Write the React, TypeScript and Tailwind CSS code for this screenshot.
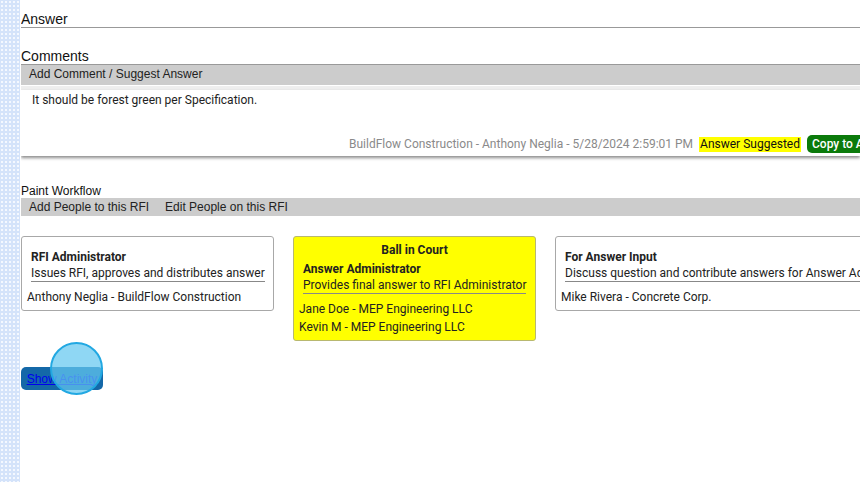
import React from "react";

const arial = { fontFamily: '"Liberation Sans", Arial, sans-serif' };
const roboto = { fontFamily: 'Roboto, "Liberation Sans", Arial, sans-serif' };

function Card({
  yellow,
  top,
  title,
  desc,
  people,
  width,
}: {
  yellow?: boolean;
  top?: string;
  title: string;
  desc: string;
  people: string[];
  width: string;
}) {
  return (
    <div
      className={
        "shrink-0 rounded-[3px] border " +
        (yellow ? "bg-[#ffff00] border-[#b8b870] " : "bg-white border-[#a8a8a8] ") +
        width
      }
      style={roboto}
    >
      <div className="px-[5px] pt-[6px] pb-[4px] text-[12px] leading-[18px] text-[#222] whitespace-nowrap">
        {top && <div className="text-center font-bold leading-[14px] mb-[5px]">{top}</div>}
        <div className={"px-[4px] " + (top ? "" : "pt-[7px]")}>
          <div className="font-bold leading-[14px]">{title}</div>
          <div className="border-b border-[#888] leading-[15px] inline-block">{desc}</div>
        </div>
        <div className="mt-[6px]">
          {people.map((p) => (
            <div key={p}>{p}</div>
          ))}
        </div>
      </div>
    </div>
  );
}

export default function App() {
  return (
    <div className="w-[860px] h-[482px] flex overflow-hidden bg-white">
      <div className="w-[20px] h-full shrink-0 bg-[#d4e3fa] bg-[image:radial-gradient(circle,#f4f8ff_1px,transparent_1.2px)] bg-[length:4px_4px]" />
      <div className="ml-px flex-1 min-w-0 overflow-hidden relative">
        <div className="pt-[11px] text-[14px] leading-[16px] text-[#111] border-b border-[#999]" style={arial}>
          Answer
        </div>
        <div className="mt-[20px] text-[14px] leading-[16px] text-[#111]" style={arial}>
          Comments
        </div>
        <div className="h-[21px] bg-[#cccccc] border-t border-[#999] pl-[8px] text-[12px] leading-[19px] text-[#222]" style={arial}>
          Add Comment / Suggest Answer
        </div>
        <div className="mt-px h-[4px] bg-[#eeeeee]" />
        <div className="bg-white shadow-[0_2px_3px_rgba(0,0,0,0.45)] h-[66px] relative" style={roboto}>
          <div className="pl-[11px] pt-[3px] text-[12px] leading-[14px] text-[#222]">
            It should be forest green per Specification.
          </div>
          <div className="absolute left-[328px] top-[45px] flex items-center whitespace-nowrap text-[12px]">
            <span className="text-[#8a8a8a]">BuildFlow Construction - Anthony Neglia - 5/28/2024 2:59:01 PM</span>
            <span className="ml-[6px] bg-[#ffff00] text-[#111] px-px leading-[15px]">Answer Suggested</span>
            <span className="ml-[6px] bg-[#0b7a0b] text-white rounded-[5px] pl-[5px] pr-[8px] leading-[18px] font-medium">
              Copy to Answer
            </span>
          </div>
        </div>
        <div className="mt-[28px] text-[12px] leading-[14px] text-[#111]" style={arial}>
          Paint Workflow
        </div>
        <div className="h-[18px] bg-[#cccccc] flex gap-[16px] pl-[8px] text-[12px] leading-[18px] text-[#222]" style={arial}>
          <span>Add People to this RFI</span>
          <span>Edit People on this RFI</span>
        </div>
        <div className="mt-[20px] flex items-start gap-[19px]">
          <Card
            width="w-[253px]"
            title="RFI Administrator"
            desc="Issues RFI, approves and distributes answer"
            people={["Anthony Neglia - BuildFlow Construction"]}
          />
          <Card
            yellow
            width="w-[243px]"
            top="Ball in Court"
            title="Answer Administrator"
            desc="Provides final answer to RFI Administrator"
            people={["Jane Doe - MEP Engineering LLC", "Kevin M - MEP Engineering LLC"]}
          />
          <Card
            width="w-[420px]"
            title="For Answer Input"
            desc="Discuss question and contribute answers for Answer Administrator"
            people={["Mike Rivera - Concrete Corp."]}
          />
        </div>
        <div className="mt-[26px] w-[82px] h-[23px] rounded-[5px] bg-[#1468a8] flex items-center justify-center text-[12px]" style={arial}>
          <span className="text-[#0000ee] underline">Show Activity</span>
        </div>
        <div className="absolute left-[29px] top-[342px] w-[53px] h-[53px] rounded-full bg-[rgba(100,200,240,0.72)] border-2 border-[#22a8e2]" />
      </div>
    </div>
  );
}
